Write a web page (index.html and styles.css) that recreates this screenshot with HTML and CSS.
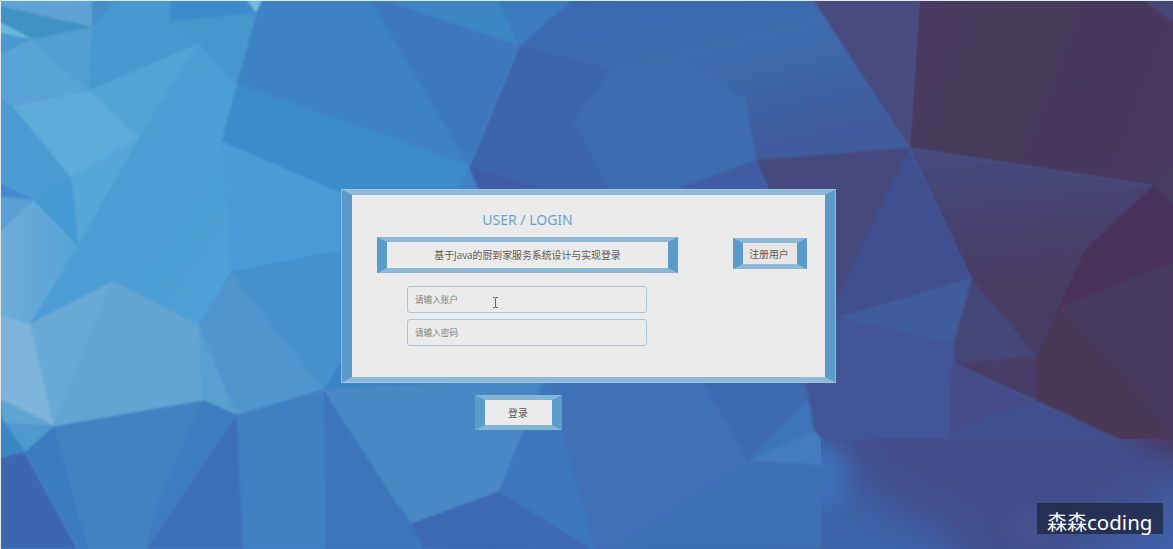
FILE: index.html
```
<!DOCTYPE html>
<html lang="zh-CN">
<head>
<meta charset="utf-8">
<title>USER / LOGIN</title>
<link rel="stylesheet" href="styles.css">
</head>
<body>
<svg class="backdrop" viewBox="0 0 1173 549" preserveAspectRatio="none" aria-hidden="true">
  <defs>
    <filter id="soft" x="0" y="0" width="1" height="1"><feGaussianBlur stdDeviation="0.8"/></filter>
    <filter id="haze" x="-50%" y="-50%" width="200%" height="200%"><feGaussianBlur stdDeviation="20"/></filter>
    <filter id="mist" x="-50%" y="-50%" width="200%" height="200%"><feGaussianBlur stdDeviation="11"/></filter>
    <clipPath id="corner"><rect x="821" y="439" width="352" height="110"/></clipPath>
    <linearGradient id="base" x1="0" y1="0" x2="1" y2="0"><stop offset="0" stop-color="#4591ce"/><stop offset=".38" stop-color="#4088c8"/><stop offset=".48" stop-color="#3d6ab0"/><stop offset=".64" stop-color="#3f5fa5"/><stop offset=".7" stop-color="#435293"/><stop offset=".85" stop-color="#443f70"/><stop offset="1" stop-color="#473960"/></linearGradient>
    <linearGradient id="sky" x1="0" y1="0" x2="0.6" y2="1"><stop offset="0" stop-color="#3b69b1"/><stop offset=".45" stop-color="#3c6cae"/><stop offset="1" stop-color="#405b9d"/></linearGradient>
    <linearGradient id="wine" x1="0" y1="0" x2="1" y2="0.3"><stop offset="0" stop-color="#4a395f"/><stop offset=".35" stop-color="#463b5c"/><stop offset="1" stop-color="#49385e"/></linearGradient>
    <linearGradient id="dusk" x1="0" y1="0" x2="0.2" y2="1"><stop offset="0" stop-color="#454a80"/><stop offset="1" stop-color="#473d65"/></linearGradient>
    <linearGradient id="pale" x1="0" y1="0" x2="1" y2="0"><stop offset="0" stop-color="#70add7"/><stop offset="1" stop-color="#55a3d7"/></linearGradient>
    <linearGradient id="aqua" x1="0" y1="0" x2="1" y2="1"><stop offset="0" stop-color="#4b9cd3"/><stop offset="1" stop-color="#50a0d9"/></linearGradient>
  </defs>
  <rect width="1173" height="549" fill="url(#base)"/>
  <g filter="url(#soft)">
    <path fill="#5fa3d5" d="M0 0H92V27L0 6Z"/>
    <path fill="#4192c5" d="M0 6L92 27 32 39 0 22Z"/>
    <path fill="#6bb9dc" d="M0 22L32 39 0 33Z"/>
    <path fill="#4a9ace" d="M0 33L32 39 0 54Z"/>
    <path fill="#4690c5" d="M92 0H115L92 27Z"/>
    <path fill="#4799d0" d="M115 0H170V21L199 43 89 90 92 27Z"/>
    <path fill="#529fd3" d="M32 39L92 27 89 90 50 57Z"/>
    <path fill="#5aa3d7" d="M0 54L32 39 50 57 89 90 12 106 0 99Z"/>
    <path fill="#5eabda" d="M12 106L89 90 140 137 71 178Z"/>
    <path fill="#52a3d6" d="M89 90L199 43 140 137Z"/>
    <path fill="url(#aqua)" d="M199 43L236 84 221 141 232 272 199 325 113 281 30 324 78 246 140 137Z"/>
    <path fill="#3d8bca" d="M170 0H247L256 13 170 21Z"/>
    <path fill="#4695cd" d="M170 21L256 13 236 84 199 43Z"/>
    <path fill="#6fc0dd" d="M247 0H262L256 13Z"/>
    <path fill="#3d83c4" d="M262 0H370L469 167 400 141 236 84 256 13Z"/>
    <path fill="#3d78bd" d="M370 0H392L519 46 469 167Z"/>
    <path fill="#3c85c3" d="M380 0H498L519 46 392 3Z"/>
    <path fill="#3b7cbf" d="M498 0H573L519 46Z"/>
    <path fill="url(#sky)" d="M573 0H813L909 148 756 160 740 120 519 46Z"/>
    <path fill="#3e65ab" d="M519 46L590 62 617 72 690 80 746 99 756 160 675 192H495L469 167Z"/>
    <path fill="#3d6cb0" d="M612 70L690 62 720 82 746 99 756 160 675 192H610L573 120Z"/>
    <path fill="#3f5ba4" d="M469 167L550 192H480ZM756 160L670 192H768Z"/>
    <path fill="#3d8cca" d="M236 84L400 141 469 167 455 192H341L221 141Z"/>
    <path fill="#4b9bd6" d="M221 141L341 193V250L232 272Z"/>
    <path fill="#57a6d9" d="M140 137L78 246 71 178Z"/>
    <path fill="#449ad4" d="M71 178L78 246 33 200Z"/>
    <path fill="#4b9bd3" d="M0 99L12 106 71 178 33 200 0 183Z"/>
    <path fill="#4389cf" d="M0 183L33 200 0 196Z"/>
    <path fill="#58a0d6" d="M0 196L33 200 0 232Z"/>
    <path fill="url(#pale)" d="M0 232L33 200 78 246 30 324 0 314Z"/>
    <path fill="#7eb3da" d="M0 314L30 324 54 426 0 399Z"/>
    <path fill="#67aad5" d="M30 324L113 281 54 426Z"/>
    <path fill="#62a5d3" d="M113 281L199 325 203 400 54 426Z"/>
    <path fill="#5a9fd1" d="M199 325L237 415 203 400Z"/>
    <path fill="#5195cf" d="M199 325L232 274 324 389 237 415Z"/>
    <path fill="#4592cd" d="M232 274L341 250V362L324 389Z"/>
    <path fill="#3d83c4" d="M324 389L341 362H548V386Z"/>
    <path fill="#60a5d1" d="M0 399L54 426 4 423Z"/>
    <path fill="#5099cf" d="M4 423L54 426 25 452Z"/>
    <path fill="#3a86c5" d="M0 416L25 452 0 458Z"/>
    <path fill="#3c66b0" d="M0 458L25 452 78 549H0Z"/>
    <path fill="#3b7cbf" d="M25 452L54 426 90 549H78Z"/>
    <path fill="#4282c1" d="M54 426L203 400 237 415 147 549H88Z"/>
    <path fill="#3c7bbe" d="M203 400L237 415 147 549 155 510Z"/>
    <path fill="#3e6eb8" d="M237 415L243 549H147Z"/>
    <path fill="#4080c1" d="M237 415L324 389 325 549H243Z"/>
    <path fill="#3e74bb" d="M324 389L411 523 424 549H325Z"/>
    <path fill="#4888c5" d="M324 389L542 380 498 491 411 523Z"/>
    <path fill="#3d68b2" d="M411 523L498 491 590 549H424Z"/>
    <path fill="#3d77bd" d="M542 380H555L595 549H590L498 491Z"/>
    <path fill="#3f70b6" d="M550 380H704L748 461 610 549H595L562 430Z"/>
    <path fill="#3d6fb3" d="M748 461L610 549H824V439Z"/>
    <path fill="#3d69ae" d="M702 380H806L809 398 748 461Z"/>
    <path fill="#3d74b8" d="M809 398L814 430 748 461Z"/>
    <path fill="#447bc0" d="M748 461L814 430 824 439V465Z"/>
    <path fill="#464b80" d="M813 0H919L909 148Z"/>
    <path fill="url(#wine)" d="M919 0H1173V205L1153 186 909 148Z"/>
    <path fill="#464678" d="M1143 0H1173V22Z"/>
    <path fill="#444a7e" d="M756 160L909 148 851 274 836 300 770 192Z"/>
    <path fill="#41508f" d="M909 148L971 278 836 320V300Z"/>
    <path fill="url(#dusk)" d="M909 148L1153 186 1085 250 1075 275 971 278Z"/>
    <path fill="#463e64" d="M971 278L1075 275 1058 308 1047 345 1037 357Z"/>
    <path fill="#49335a" d="M1153 186L1085 250 1058 308 1173 262V205Z"/>
    <path fill="#463c61" d="M1153 186L1173 160V205Z"/>
    <path fill="#425497" d="M832 318L953 341V445H826L814 430 809 398 804 380Z"/>
    <path fill="#454778" d="M971 278L1037 357 952 363 953 343Z"/>
    <path fill="#415c9b" d="M836 318L971 278 953 343Z"/>
    <path fill="#473c66" d="M953 363L1037 357V401Z"/>
    <path fill="#434f8e" d="M951 420L1037 401 1118 439 1130 446H948Z"/>
    <path fill="#444b88" d="M952 363L1037 401 951 428Z"/>
    <path fill="#483857" d="M1058 308L1173 262V442H1122L1037 401V357Z"/>
    <path fill="#463b5e" d="M1058 308L1173 262V439L1130 385Z"/>
    <g class="ridges">
      <path d="M54 426L203 400M30 324L54 426M33 200L78 246M221 141L236 84 256 13M469 167L519 46M324 389L400 508M411 523L498 491 542 383M25 452L78 549"/>
      <path class="cool" d="M813 0L909 148 1153 186M919 0L909 148 971 278 953 343V363L1118 439M756 160L768 190"/>
    </g>
  </g>
  <g clip-path="url(#corner)">
    <rect x="821" y="439" width="352" height="110" fill="#424e8c"/>
    <g filter="url(#haze)">
      <path fill="#3e65ac" d="M780 440L835 450 870 500 950 540 970 600H780Z"/>
      <path fill="#3f5fa6" d="M1185 480L1220 480V600H980L1090 550Z"/>
    </g>
    <g filter="url(#mist)">
      <ellipse cx="822" cy="474" rx="22" ry="30" fill="#3e72b8"/>
      <path fill="#48395e" d="M1110 425H1200V463L1150 446Z"/>
      <ellipse cx="1030" cy="529" rx="15" ry="6" fill="#56619c"/>
    </g>
  </g>
  <path class="frame-edge" d="M0.5 549V0.5H1173"/>
</svg>

<main class="page">
  <form class="login">
    <section class="card">
      <div class="fields">
        <h1 class="heading">USER / LOGIN</h1>
        <div class="bevel caption">基于Java的厨到家服务系统设计与实现登录</div>
        <input class="field" type="text" placeholder="请输入账户">
        <input class="field" type="password" placeholder="请输入密码">
      </div>
      <button class="bevel register" type="button">注册用户</button>
    </section>
    <button class="bevel submit" type="button">登录</button>
  </form>
</main>

<svg class="pointer" viewBox="0 0 7 11" aria-hidden="true"><path d="M1 .5H3L3.5 1 4 .5H6M3.5 1V10M1 10.5H3L3.5 10 4 10.5H6"/></svg>
<div class="watermark">森森<span class="latin">coding</span></div>
</body>
</html>
```
FILE: styles.css
```
* { box-sizing: border-box; }

body {
  margin: 0;
  width: 1173px;
  height: 549px;
  overflow: hidden;
  position: relative;
  font-family: "Open Sans", "Noto Sans CJK SC", sans-serif;
  color: #555;
}

.backdrop {
  position: absolute;
  inset: 0;
  width: 100%;
  height: 100%;
}

.ridges path {
  fill: none;
  stroke: #7cc4e6;
  stroke-width: 1;
  opacity: .3;
}

.ridges .cool {
  stroke: #4a78c0;
  opacity: .5;
}

.frame-edge {
  fill: none;
  stroke: #dfeaf0;
  stroke-width: 1;
}

.page {
  position: relative;
  padding: 189px 0 0 341px;
}

.login { width: 495px; }

.card {
  display: flex;
  align-items: flex-start;
  height: 194px;
  padding-left: 25px;
  background: #ebebeb;
  border: solid;
  border-width: 6px 11px;
  border-color: #8db8d8 #5b9bc9;
  outline: 1px solid rgba(175, 205, 228, .65);
  outline-offset: -1px;
}

.fields {
  display: flex;
  flex-direction: column;
  align-items: center;
  width: 301px;
  padding-top: 14px;
}

.heading {
  margin: 0 0 6px;
  height: 22px;
  line-height: 21px;
  font-family: "Noto Sans", sans-serif;
  font-size: 14px;
  font-weight: 400;
  color: #6ba2cd;
}

.bevel {
  display: flex;
  align-items: center;
  justify-content: center;
  margin: 0;
  padding: 0;
  background: #ebebeb;
  border: solid;
  border-width: 5px 10px;
  border-color: #8db8d8 #5b9bc9;
  border-radius: 0;
  font: 9.9px "Open Sans", "Noto Sans CJK SC", sans-serif;
  color: #5a5a5a;
  white-space: nowrap;
}

.caption {
  width: 301px;
  height: 36px;
  margin-bottom: 13px;
}

.field {
  width: 240px;
  height: 27px;
  margin: 0 1px 6px 0;
  padding: 0 7px 1px;
  border: 1.5px solid #a2c6e1;
  border-radius: 3px;
  background: transparent;
  font: 8.6px "Noto Sans CJK SC", sans-serif;
}

.field::placeholder {
  color: #808080;
  opacity: 1;
}

.register {
  width: 74px;
  height: 31px;
  margin: 43px 0 0 55px;
  padding-right: 2px;
  background: #e9e5e5;
}

.submit {
  width: 87px;
  height: 35px;
  margin: 12px 0 0 134px;
  padding-right: 1px;
  border-color: #83b5d7 #5b9cc8;
}

.pointer {
  position: absolute;
  left: 492px;
  top: 297px;
  width: 7px;
  height: 11px;
  fill: none;
  stroke: #666;
  stroke-width: 1;
}

.watermark {
  position: absolute;
  left: 1037px;
  top: 503px;
  width: 126px;
  height: 31px;
  padding-left: 10px;
  line-height: 39px;
  font-size: 20px;
  color: #fff;
  background: rgba(27, 36, 62, .72);
  white-space: nowrap;
}

.watermark .latin {
  font-family: "Noto Sans", sans-serif;
  font-size: 20.5px;
}
```
